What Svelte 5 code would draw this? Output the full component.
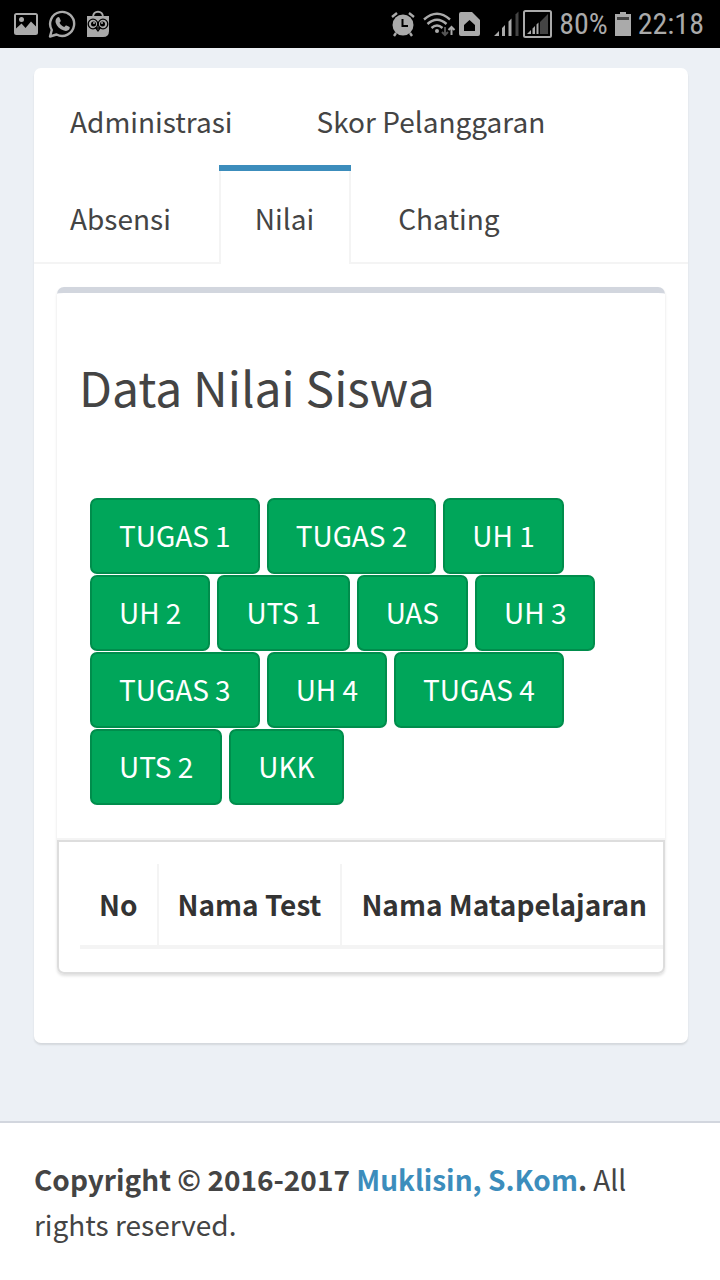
<script>
  const tabs = ['Administrasi', 'Skor Pelanggaran', 'Absensi', 'Nilai', 'Chating'];
  const tests = [
    'TUGAS 1', 'TUGAS 2', 'UH 1', 'UH 2', 'UTS 1', 'UAS',
    'UH 3', 'TUGAS 3', 'UH 4', 'TUGAS 4', 'UTS 2', 'UKK'
  ];
  const columns = ['No', 'Nama Test', 'Nama Matapelajaran'];
  let active = $state('Nilai');
</script>

<header class="status">
  <div class="notices">
    <svg width="24" height="24" viewBox="0 0 24 24" aria-hidden="true">
      <path fill-rule="evenodd" d="M2.500 1h19A2.500 2.500 0 0 1 24 3.500v17a2.500 2.500 0 0 1-2.500 2.500h-19A2.500 2.500 0 0 1 0 20.500v-17A2.500 2.500 0 0 1 2.500 1ZM2 3v13.500l5.500-5 4 4.500 5.500-6.500 5 5V3Z" />
      <circle cx="7.500" cy="7.500" r="2.500" />
    </svg>
    <svg width="28" height="30" viewBox="0 0 28 30" aria-hidden="true">
      <path d="M2 27.500 3.800 21A12 12 0 1 1 8.500 25.500Z" fill="none" stroke="currentColor" stroke-width="2.400" stroke-linejoin="round" />
      <path d="M9.300 8.500c.6-.7 1.700-.7 2.100.1l1.300 2.900c.2.600-.2 1.200-1.200 2.300 1.100 2 2.600 3.400 4.700 4.300 1.200-1.400 1.500-1.900 2.200-1.600l2.700 1.300c.8.400.8 1 .4 2-.9 2-3.300 2.600-5.600 1.800-4.200-1.400-7.200-4.500-8.200-7.900-.6-2 .2-4.100 1.600-5.200Z" />
    </svg>
    <svg width="24" height="28" viewBox="0 0 24 28" aria-hidden="true">
      <path d="M7 7C7 0 17 0 17 7" fill="none" stroke="currentColor" stroke-width="2" />
      <path d="M1 6h22v15q0 6-6 6H1Z" />
      <g stroke="#000" stroke-width="1.300">
        <circle cx="7" cy="14" r="4.800" fill="none" />
        <circle cx="17" cy="14" r="4.800" fill="none" />
        <path d="m9.800 18 2.200 3 2.200-3Z" fill="#aaa" />
      </g>
      <circle cx="7.500" cy="14" r="2.500" fill="#000" />
      <circle cx="16.500" cy="14" r="2.500" fill="#000" />
      <circle cx="8" cy="13" r="1" /><circle cx="16" cy="13" r="1" />
    </svg>
  </div>
  <div class="system">
    <svg width="26" height="26" viewBox="0 0 26 26" aria-hidden="true">
      <circle cx="13" cy="14" r="10.500" />
      <path d="m2 6 5-4M24 6l-5-4M6 22l-2 3M20 22l2 3" fill="none" stroke="currentColor" stroke-width="2.400" />
      <path d="M12.500 8v7H18" fill="none" stroke="#000" stroke-width="2" />
    </svg>
    <svg class="wifi" width="33" height="26" viewBox="0 0 33 26" aria-hidden="true">
      <g fill="none" stroke="currentColor" stroke-width="2.400">
        <path d="M1 8.500Q14-3 27 8.500M4.500 13Q14 4.500 23.500 13M8.500 17Q14 12 19.500 17" />
      </g>
      <circle cx="14" cy="20" r="2" />
      <path d="M22 16v8m-3-3 3 3 3-3" fill="none" stroke="#555" stroke-width="2" />
      <path d="M28.500 24v-8m-3 3 3-3 3 3" fill="none" stroke="currentColor" stroke-width="2" />
    </svg>
    <svg width="21" height="24" viewBox="0 0 21 24" aria-hidden="true">
      <path fill-rule="evenodd" d="M2 0h11l8 8v14q0 2-2 2H2q-2 0-2-2V2q0-2 2-2Zm8.500 8L5 13v6h11v-6Z" />
    </svg>
    <svg class="signal" width="26" height="26" viewBox="0 0 26 26" aria-hidden="true">
      <path d="m1 25 5-5v5ZM9 17l3-3v11H9ZM15.500 10.500l3-3V25h-3Z" />
      <path d="m22.500 3.500 3-3V25h-3Z" fill="#444" />
    </svg>
    <svg width="29" height="28" viewBox="0 0 29 28" aria-hidden="true">
      <rect x="1" y="1" width="27" height="26" rx="1.500" fill="none" stroke="currentColor" stroke-width="2" />
      <path d="m4 24 4-4v4ZM9.500 18.500l2.500-2.500v8H9.500ZM13.500 14.500l2-2V24h-2Z" />
      <path d="m17 12 8-8v20h-8Z" fill="#444" />
    </svg>
    <span>80%</span>
    <svg width="16" height="24" viewBox="0 0 16 24" aria-hidden="true">
      <path d="M5 0h6v2h5v22H0V2h5Z" /><path d="M2 5h12v3H2Z" fill="#444" />
    </svg>
    <span>22:18</span>
  </div>
</header>

<main>
  <section class="card">
    <ul class="tabs">
      {#each tabs as tab}
        <li class:active={tab === active}>
          <button type="button" onclick={() => (active = tab)}>{tab}</button>
        </li>
      {/each}
    </ul>
    <div class="content">
      <div class="box">
        <div class="box-head">
          <h3>Data Nilai Siswa</h3>
          <div class="tests">
            {#each tests as test}
              <button type="button">{test}</button>
            {/each}
          </div>
        </div>
        <div class="scroller">
          <table>
            <thead>
              <tr>
                {#each columns as column}
                  <th scope="col">{column}</th>
                {/each}
              </tr>
            </thead>
          </table>
        </div>
      </div>
    </div>
  </section>
</main>

<footer>
  <strong>Copyright © 2016-2017 <a href="#top">Muklisin, S.Kom</a>.</strong> All rights reserved.
</footer>

<style>
  :global(body) {
    margin: 0;
    background: #fff;
    color: #444;
    font: 28px/45px "Noto Sans CJK SC", "Noto Sans", sans-serif;
  }
  button {
    font: inherit;
    color: inherit;
    cursor: pointer;
  }
  .status {
    display: flex;
    justify-content: space-between;
    align-items: center;
    height: 48px;
    padding: 0 16px 0 14px;
    background: #000;
    color: #aaa;
    font: 30px/48px "Roboto Condensed", Roboto, sans-serif;
  }
  .status svg {
    fill: currentColor;
    flex: none;
  }
  .notices,
  .system {
    display: flex;
    align-items: center;
    gap: 10px;
  }
  .system {
    gap: 7px;
  }
  .wifi {
    margin-right: -4px;
  }
  .signal {
    margin: 0 -3px 0 6px;
  }
  main {
    padding: 20px 32px 78px 34px;
    background: #ecf0f5;
  }
  .card {
    background: #fff;
    border-radius: 7px;
    box-shadow: 0 2px 2px rgba(0, 0, 0, 0.1);
  }
  .tabs {
    display: flex;
    flex-wrap: wrap;
    column-gap: 11px;
    margin: 0;
    padding: 0;
    list-style: none;
    border-bottom: 2px solid #f4f4f4;
  }
  .tabs li {
    box-sizing: border-box;
    height: 97px;
    border-top: 6px solid transparent;
  }
  .tabs button {
    box-sizing: border-box;
    height: 91px;
    padding: 4px 35px 0 34px;
    border: 0 solid transparent;
    border-width: 0 2px;
    background: transparent;
  }
  .tabs .active {
    border-top-color: #3c8dbc;
    margin-bottom: -2px;
    height: 99px;
  }
  .tabs .active button {
    height: 93px;
    padding-bottom: 2px;
    background: #fff;
    border-color: #f4f4f4;
  }
  .content {
    padding: 23px;
  }
  .box {
    margin-bottom: 46px;
    border-top: 6px solid #d2d6de;
    border-radius: 7px;
    box-shadow: 0 2px 3px rgba(0, 0, 0, 0.12);
  }
  .box-head {
    padding: 65px 22px 33px;
    border-bottom: 2px solid #f4f4f4;
  }
  h3 {
    margin: 0 0 83px;
    font-size: 48px;
    line-height: 57px;
    font-weight: 400;
  }
  .tests {
    display: flex;
    flex-wrap: wrap;
    gap: 1px 7px;
    padding: 0 11px;
  }
  .tests button {
    height: 76px;
    padding: 0 27px 2px;
    color: #fff;
    background: #00a65a;
    border: 2px solid #008d4c;
    border-radius: 7px;
  }
  .scroller {
    overflow: hidden;
    padding: 22px 21px 23px;
    border: 2px solid #ddd;
    border-radius: 0 0 7px 7px;
  }
  table {
    border-collapse: separate;
    border-spacing: 0;
    color: #333;
  }
  th {
    padding: 18px 19px;
    text-align: left;
    white-space: nowrap;
    border-right: 2px solid #f4f4f4;
    border-bottom: 4px solid #f4f4f4;
  }
  footer {
    padding: 34px;
    border-top: 2px solid #d2d6de;
  }
  a {
    color: #3c8dbc;
    text-decoration: none;
  }
</style>
